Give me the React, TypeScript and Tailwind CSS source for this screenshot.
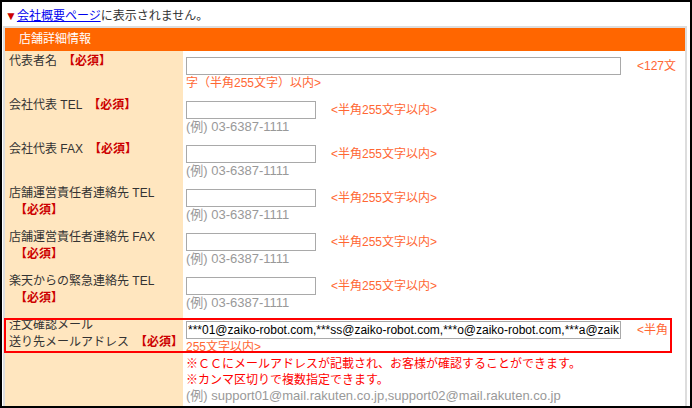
import React from "react";

const font = { fontFamily: '"Liberation Sans", "Noto Sans CJK JP", sans-serif' };

function Req() {
  return <span className="ml-[6px] font-bold text-[#cc0000]">【必須】</span>;
}

function PhoneRow({ label }: { label: React.ReactNode }) {
  return (
    <div className="flex h-[44px]">
      <div className="w-[178px] shrink-0 bg-[#ffe6bf] pl-[4px] pt-[2px] leading-[17px] text-[#333]">{label}</div>
      <div className="flex-1 pl-[3px] pt-[6px]">
        <div className="flex items-start">
          <input className="h-[18px] w-[130px] border border-[#a9a9a9] bg-white" readOnly />
          <span className="ml-[15px] leading-[18px] text-[#ff6633]">&lt;半角255文字以内&gt;</span>
        </div>
        <div className="text-[13px] leading-[16px] text-[#999]">(例) 03-6387-1111</div>
      </div>
    </div>
  );
}

export default function App() {
  return (
    <div className="relative h-[408px] w-[692px] overflow-hidden border-2 border-black bg-white text-[12px]" style={font}>
      <div className="h-[24px] pl-[3px] pt-[2px] leading-[24px] text-[#333]">
        <span className="text-[#cc0000]">▼</span>
        <span className="text-[#0000ee] underline">会社概要ページ</span>
        <span>に表示されません。</span>
      </div>

      <div className="ml-[1px] w-[684px] border-2 border-b-0 border-[#dddddd]">
        <div className="h-[23px] bg-[#ff6600] pl-[14px] leading-[23px] text-white">店舗詳細情報</div>

        <div className="flex h-[44px]">
          <div className="w-[178px] shrink-0 bg-[#ffe6bf] pl-[4px] pt-[2px] leading-[17px] text-[#333]">
            代表者名<Req />
          </div>
          <div className="flex-1 pl-[3px] pt-[6px]">
            <div className="flex items-start">
              <input className="h-[18px] w-[435px] border border-[#a9a9a9] bg-white" readOnly />
              <span className="ml-[16px] leading-[18px] text-[#ff6633]">&lt;127文</span>
            </div>
            <div className="leading-[16px] text-[#ff6633]">字（半角255文字）以内&gt;</div>
          </div>
        </div>

        <PhoneRow label={<>会社代表 TEL<Req /></>} />
        <PhoneRow label={<>会社代表 FAX<Req /></>} />
        <PhoneRow label={<>店舗運営責任者連絡先 TEL<br /><Req /></>} />
        <PhoneRow label={<>店舗運営責任者連絡先 FAX<br /><Req /></>} />
        <PhoneRow label={<>楽天からの緊急連絡先 TEL<br /><Req /></>} />

        <div className="flex h-[100px]">
          <div className="w-[178px] shrink-0 whitespace-nowrap bg-[#ffe6bf] pl-[4px] pt-[2px] leading-[17px] text-[#333]">
            注文確認メール
            <br />
            送り先メールアドレス<Req />
          </div>
          <div className="flex-1 pl-[3px] pt-[6px]">
            <div className="flex items-start">
              <input
                className="h-[18px] w-[435px] border border-[#a9a9a9] bg-white px-[1px] text-[12px] text-black"
                style={font}
                readOnly
                defaultValue="***01@zaiko-robot.com,***ss@zaiko-robot.com,***o@zaiko-robot.com,***a@zaiko-robot.com"
              />
              <span className="ml-[16px] leading-[18px] text-[#ff6633]">&lt;半角</span>
            </div>
            <div className="leading-[17px] text-[#ff6633]">255文字以内&gt;</div>
            <div className="leading-[16px] text-[#ff0000]">※ＣＣにメールアドレスが記載され、お客様が確認することができます。</div>
            <div className="leading-[16px] text-[#ff0000]">※カンマ区切りで複数指定できます。</div>
            <div className="text-[13px] leading-[16px] text-[#999]">
              (例) support01@mail.rakuten.co.jp,support02@mail.rakuten.co.jp
            </div>
          </div>
        </div>
      </div>

      <div className="pointer-events-none absolute left-[2px] top-[316px] h-[35px] w-[668px] border-2 border-[#ff0000]" />
    </div>
  );
}
